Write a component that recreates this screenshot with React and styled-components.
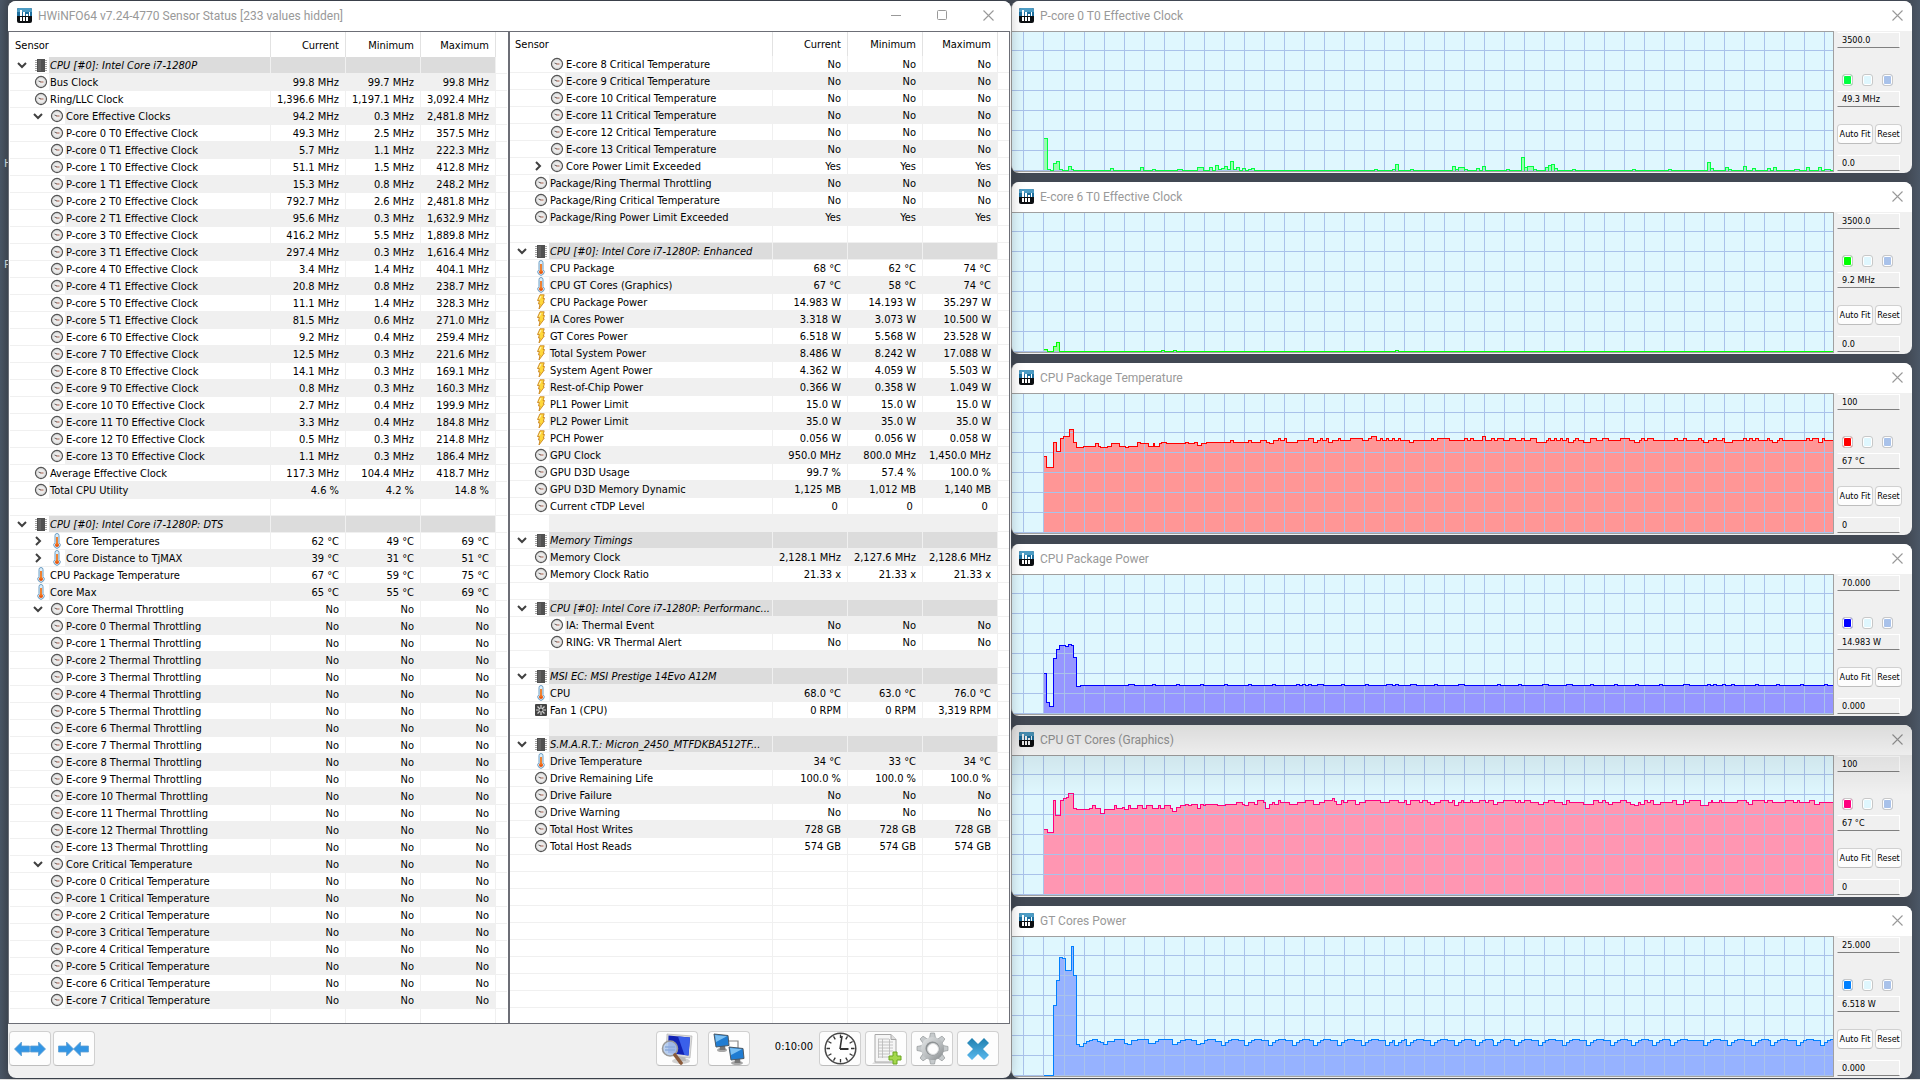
import styled, { createGlobalStyle, css } from "styled-components";

const GlobalStyle = createGlobalStyle`
    * {
        box-sizing: border-box;
    }

    body {
        margin: 0;
        background: #444d5a;
        font-family: 'DejaVu Sans Condensed', 'DejaVu Sans', sans-serif;
        font-size: 11px;
        color: #000;
        overflow: hidden;
    }

    button, input {
        font-family: inherit;
        font-size: inherit;
        color: inherit;
        margin: 0;
        padding: 0;
    }
`

const Desktop = styled.div`
    position: relative;
    display: grid;
    grid-template-columns: minmax(0, 1003fr) minmax(0, 901fr);
    height: 100vh;
    padding: 1px 8px;
    background: linear-gradient(90deg, #4b5766 0, #414853 12px, #414853 calc(100% - 14px), #4b5766 100%);
    border-bottom: 1px solid #e4e4e4;
`

const DesktopLabel = styled.span`
    position: absolute;
    left: 4px;
    top: ${p => p.$top}px;
    font-family: 'Noto Sans', sans-serif;
    font-size: 11px;
    line-height: 16px;
    color: #dfe3e8;
`

const MainWindow = styled.section`
    position: relative;
    z-index: 1;
    display: flex;
    flex-direction: column;
    min-height: 0;
    background: #f0f0f0;
    border-radius: 8px;
    overflow: hidden;
    box-shadow: 0 0 14px rgba(0, 0, 0, 0.22);
`

const TitleBar = styled.header`
    display: flex;
    align-items: center;
    height: 30px;
    flex: none;
    padding: 0 0 2px ${p => p.$inset}px;
    background: #fff;
`

const Title = styled.h1`
    flex: 1;
    margin: 0 0 0 6px;
    padding-top: 2px;
    font-family: 'Roboto', sans-serif;
    font-weight: 400;
    font-size: 12px;
    line-height: 16px;
    color: #999;
    white-space: nowrap;
`

const CaptionButton = styled.button`
    display: flex;
    align-items: center;
    justify-content: center;
    width: ${p => p.$width}px;
    height: 28px;
    border: 0;
    background: none;
    color: #999;
`

const Lists = styled.div`
    display: grid;
    grid-template-columns: minmax(0, 1fr) minmax(0, 1fr);
    grid-template-rows: minmax(0, 1fr);
    flex: 1;
    min-height: 0;
    padding-right: 1px;
`

const ListFrame = styled.div`
    overflow: hidden;
    background: #fff;
    border: 1px solid #6c6e76;
    padding: 0 ${p => p.$gutter}px;
`

const Table = styled.table`
    width: 100%;
    table-layout: fixed;
    border-collapse: separate;
    border-spacing: 0;
`

const HeadCell = styled.th`
    height: ${p => p.$height}px;
    padding: 2px 6px 0 5px;
    font-weight: 400;
    line-height: 16px;
    text-align: ${p => p.$first ? "left" : "right"};
    border-right: 1px solid ${p => p.$last ? "transparent" : "#e2e2e2"};
`

const shade = {
    plain: "#fff",
    odd: "#f0f0f0",
    group: "#dcdcdc",
}

const cell = css`
    height: 17px;
    line-height: 14px;
    padding: 0;
    border-right: 1px solid #f0f0f0;
    border-bottom: 1px solid #f0f0f0;
    white-space: nowrap;
`

const NameCell = styled.td`
    ${cell}
`

const ValueCell = styled.td`
    ${cell}
    padding: 2px 6px 0 0;
    text-align: right;
    background: ${p => shade[p.$shade]};
`

const TailCell = styled.td`
    ${cell}
    border-right: 0;
`

const NameRow = styled.div`
    display: flex;
    height: 16px;
    padding-left: ${p => 4 + p.$level * 16}px;
`

const ToggleSlot = styled.span`
    flex: none;
    width: 19px;
`

const Toggle = styled.button`
    display: flex;
    align-items: center;
    justify-content: center;
    width: 16px;
    height: 16px;
    border: 0;
    background: none;
`

const IconSlot = styled.span`
    display: flex;
    align-items: center;
    justify-content: center;
    flex: none;
    width: 16px;
    height: 16px;
`

const Label = styled.span`
    flex: 1;
    min-width: 0;
    padding: 2px 0 0 1px;
    overflow: hidden;
    background: ${p => shade[p.$shade]};
    font-style: ${p => p.$shade === "group" ? "italic" : "normal"};
`

const Toolbar = styled.footer`
    display: flex;
    align-items: flex-start;
    flex: none;
    height: 54px;
    padding: 7px 12px 0 1px;
`

const ButtonGroup = styled.div`
    display: flex;
    gap: ${p => p.$gap}px;
`

const Spacer = styled.div`
    flex: 1;
`

const Timer = styled.time`
    width: 69px;
    padding: 8px 6px 0 0;
    line-height: 16px;
    text-align: right;
`

const ToolButton = styled.button`
    display: flex;
    align-items: center;
    justify-content: center;
    width: 42px;
    height: 35px;
    background: #fdfdfd;
    border: 1px solid #d0d0d0;
    border-bottom-color: #bdbdbd;
    border-radius: 4px;
`

const GraphColumn = styled.div`
    display: flex;
    flex-direction: column;
    gap: 9px;
    min-height: 0;
`

const GraphWindow = styled.section`
    position: relative;
    flex: none;
    display: flex;
    flex-direction: column;
    height: 172px;
    overflow: hidden;
    background: #f0f0f0;
    border-left: 1px solid #a0a0a0;
    border-radius: 8px;

    ${p => p.$dimmed && css`
        &::after {
            content: "";
            position: absolute;
            inset: 0;
            pointer-events: none;
            background: linear-gradient(rgba(0, 0, 0, 0.14), rgba(0, 0, 0, 0.07) 30px, rgba(0, 0, 0, 0) 70px);
        }
    `}
`

const GraphBody = styled.div`
    display: flex;
    flex: 1;
`

const Plot = styled.div`
    flex: 1;
    min-width: 0;
    height: 141px;
    border-top: 1px solid #a0a0a0;
    border-right: 1px solid #a0a0a0;
    border-bottom: 1px solid #a0a0a0;
`

const PlotSvg = styled.svg`
    display: block;
    width: 100%;
    height: 139px;
    background: #dff7fe;
`

const Side = styled.div`
    display: flex;
    flex-direction: column;
    flex: none;
    width: 78px;
    padding: 1px 0 0 3px;
    font-size: 9px;
    line-height: 14px;
`

const field = css`
    width: 63px;
    height: 16px;
    padding: 0 0 0 4px;
    background: #f0f0f0;
    border: 1px solid #fff;
    border-left-color: #f0f0f0;
    border-bottom-color: #808080;
`

const Bound = styled.input`
    ${field}
`

const Reading = styled.output`
    ${field}
    display: block;
    margin: 5px 0 17px;
`

const Swatches = styled.div`
    display: flex;
    gap: 9px;
    margin: 26px 0 0 5px;
`

const Swatch = styled.button`
    width: 11px;
    height: 12px;
    border: 1px solid #c8c8c8;
    border-radius: 3px;
    background: ${p => p.$color};
    box-shadow: inset 0 0 0 1px #fff;
`

const SideButtons = styled.div`
    display: flex;
    gap: 2px;
    margin-bottom: 11px;
`

const SideButton = styled.button`
    width: ${p => p.$width}px;
    height: 20px;
    white-space: nowrap;
    overflow: hidden;
    background: #fdfdfd;
    border: 1px solid #d0d0d0;
    border-bottom-color: #bdbdbd;
    border-radius: 4px;
`

/* ---------- icons ---------- */

function AppIcon() {
    return <svg width="15" height="15" viewBox="0 0 15 15" aria-hidden="true">
        <rect width="15" height="15" rx="2" fill="#0c0f12" />
        <path d="M0 8V2a2 2 0 0 1 2-2h11a2 2 0 0 1 2 2v6z" fill="#1d6f9e" />
        <path d="M0 4V2a2 2 0 0 1 2-2h11a2 2 0 0 1 2 2v2z" fill="#4d9cc4" />
        <path d="M3 2h2v6H3zM6 4h2v4H6zM9 6h2v2H9zM12 4h1v4h-1zM3 9h2v4H3zM6 9h2v4H6zM9 9h2v4H9z" fill="#fff" />
    </svg>
}

function MinimizeIcon() {
    return <svg width="10" height="10" shapeRendering="crispEdges"><path d="M0 5.5h10" stroke="currentColor" /></svg>
}

function MaximizeIcon() {
    return <svg width="10" height="10"><rect x=".5" y=".5" width="9" height="9" rx="1" fill="none" stroke="currentColor" /></svg>
}

function CloseIcon() {
    return <svg width="11" height="11"><path d="M.5 .5l10 10M10.5 .5l-10 10" fill="none" stroke="currentColor" strokeWidth="1.1" /></svg>
}

function Chevron({ open }) {
    return <svg width="10" height="10" viewBox="0 0 10 10">
        <path d={open ? "M1 3l4 4 4-4" : "M3 1l4 4-4 4"} fill="none" stroke="#404040" strokeWidth="2" />
    </svg>
}

function GaugeIcon() {
    return <svg width="14" height="14" viewBox="0 0 14 14">
        <circle cx="7" cy="7" r="5.5" fill="#ececec" stroke="#555" strokeWidth="1.3" />
        <circle cx="7" cy="7" r="4.3" fill="none" stroke="#cfcfcf" strokeWidth=".8" />
        <path d="M4.5 6L7 7" stroke="#555" strokeWidth=".9" />
        <path d="M6.5 7h3" stroke="#a0503c" strokeWidth=".9" />
    </svg>
}

function ThermoIcon() {
    return <svg width="8" height="16" viewBox="0 0 8 16">
        <path d="M2 2.5a2 2 0 0 1 4 0v7a3.200 3.200 0 1 1-4 0z" fill="#dceefa" stroke="#6f9fc4" strokeWidth="1" />
        <circle cx="4" cy="12" r="2" fill="#e8560e" />
        <path d="M4 4v8" stroke="#f0761e" strokeWidth="1.8" />
    </svg>
}

function BoltIcon() {
    return <svg width="10" height="16" viewBox="0 0 10 16">
        <path d="M4 .8h4.200L7 4.500h1.500L7.300 8h1L3 15l1-5H2.500l.8-3.500H1.500z" fill="#ffd83a" stroke="#c98422" strokeWidth=".9" strokeLinejoin="round" />
        <path d="M5 2L3.300 5.500" stroke="#fff6c8" />
    </svg>
}

function ChipIcon() {
    return <svg width="12" height="15" viewBox="0 0 12 15">
        <path d="M0 2.500h12M0 4.500h12M0 6.500h12M0 8.500h12M0 10.500h12M0 12.500h12" stroke="#a4a4a4" strokeWidth="1" />
        <rect x="2" y="1" width="8" height="13" fill="#505050" />
        <rect x="3" y="2" width="3" height="11" fill="#626262" />
    </svg>
}

function FanIcon() {
    return <svg width="12" height="12" viewBox="0 0 12 12">
        <rect width="12" height="12" rx="1" fill="#444" />
        <path d="M6 1v10M1 6h10M2.500 2.500l7 7M9.500 2.500l-7 7" stroke="#d4d4d4" strokeWidth="1.200" />
        <circle cx="6" cy="6" r="1.600" fill="#333" />
    </svg>
}

const icons = {
    chip: ChipIcon,
    gauge: GaugeIcon,
    temp: ThermoIcon,
    power: BoltIcon,
    fan: FanIcon,
}

const leftArrow = "M0 7l7-7v4h8v6H7v4z"
const rightArrow = "M15 7L8 0v4H0v6h8v4z"

function ArrowsIcon({ inward }) {
    return <svg width="32" height="16" viewBox="0 0 32 16">
        <g fill="#3295e4" stroke="#5f9fd2" strokeWidth=".8">
            <path transform="translate(.5 1)" d={inward ? rightArrow : leftArrow} />
            <path transform={inward ? "translate(15.500 1)" : "translate(16.500 1)"} d={inward ? leftArrow : rightArrow} />
        </g>
    </svg>
}

function MonitorSearchIcon() {
    return <svg width="32" height="32" viewBox="0 0 32 32">
        <ellipse cx="20" cy="28" rx="9" ry="3" fill="#d2d2d2" />
        <path d="M17 23h7l1 5h-9z" fill="#b8b8b8" />
        <path d="M6 1l25 2-2 22L5 22z" fill="#dcdcdc" stroke="#b4b4b4" strokeWidth=".7" />
        <path d="M7.500 2.500l21.500 2-1.500 18L7 20z" fill="#1122b4" />
        <path d="M17 3.500l12 1-1.500 18-4-.5z" fill="#3a60ea" />
        <circle cx="9" cy="15.500" r="7.500" fill="#b4cdf0" fillOpacity=".88" stroke="#9a9a9a" strokeWidth="1.600" />
        <path d="M4 14h10M4 17h10" stroke="#8aabdc" strokeWidth="1.500" />
        <path d="M14 22l6 8" stroke="#8a5a3a" strokeWidth="3.600" strokeLinecap="round" />
    </svg>
}

function NetworkIcon() {
    return <svg width="32" height="32" viewBox="0 0 32 32">
        <path d="M14 8h11v8" fill="none" stroke="#888" strokeWidth="1.200" />
        <ellipse cx="9" cy="17" rx="5" ry="2" fill="#a8a8a8" />
        <path d="M7 12h5l.5 5h-6z" fill="#777" />
        <path d="M1 1l14 1.500 1 10L3 14z" fill="#1f7cd2" stroke="#4c5a66" />
        <path d="M2 2l12 1.300L3 9z" fill="#7cc0f2" />
        <ellipse cx="24" cy="30" rx="6" ry="2" fill="#a8a8a8" />
        <path d="M22 25h5l.5 5h-6z" fill="#777" />
        <path d="M16 14l14 1.500 1 10L18 27z" fill="#1f7cd2" stroke="#4c5a66" />
        <path d="M17 15l12 1.300L18 22z" fill="#7cc0f2" />
    </svg>
}

function ClockIcon() {
    const ticks = Array.from({ length: 12 }, (_, i) => i * 30)
    return <svg width="33" height="33" viewBox="0 0 33 33">
        <circle cx="16.500" cy="16.500" r="15.300" fill="#fff" stroke="#484848" strokeWidth="1.500" />
        {ticks.map(a => <path key={a} d="M16.500 2.500v3.500" stroke="#333" strokeWidth="1.300" transform={`rotate(${a} 16.500 16.500)`} />)}
        <path d="M16 17L18 4" stroke="#333" strokeWidth="1.600" />
        <path d="M16 17h8.500" stroke="#333" strokeWidth="2.200" />
    </svg>
}

function ReportIcon() {
    return <svg width="32" height="32" viewBox="0 0 32 32">
        <path d="M4 29h20l3 2H2z" fill="#dedede" />
        <path d="M5 1.500h16l5 5V29H5z" fill="#f6f6f6" stroke="#a8a8a8" />
        <path d="M21 1.500v5h5" fill="#ddd" stroke="#a8a8a8" />
        <path d="M8 6h11M8 9h15M8 12h15M8 15h15M8 18h15M8 21h12M8 24h12M8.500 6v19M12.500 6v19M19.500 6v15" stroke="#b8b8b8" strokeWidth=".8" />
        <path d="M23 19h4v4h4v4h-4v4h-4v-4h-4v-4h4z" fill="#a4d84c" stroke="#6aa61e" />
    </svg>
}

function GearIcon() {
    const teeth = Array.from({ length: 8 }, (_, i) => i * 45)
    return <svg width="33" height="33" viewBox="0 0 33 33">
        <defs>
            <linearGradient id="steel" x2="1" y2="1">
                <stop offset="0" stopColor="#e6e8e9" />
                <stop offset=".6" stopColor="#b4b8ba" />
                <stop offset="1" stopColor="#84888a" />
            </linearGradient>
        </defs>
        {teeth.map(a => <path key={a} d="M13.500 6l1-5h4l1 5z" fill="#c6cacc" stroke="#94989a" strokeWidth=".7" transform={`rotate(${a} 16.500 16.500)`} />)}
        <circle cx="16.500" cy="16.500" r="11.500" fill="url(#steel)" />
        <circle cx="16.500" cy="16.500" r="7" fill="#8e9294" />
        <circle cx="17" cy="17" r="5.500" fill="#fdfdfd" stroke="#d8dadb" />
    </svg>
}

function ExitIcon() {
    return <svg width="24" height="24" viewBox="0 0 24 24">
        <defs>
            <linearGradient id="exit" x2="0" y2="1">
                <stop offset="0" stopColor="#1f7fae" />
                <stop offset="1" stopColor="#5bb9ee" />
            </linearGradient>
        </defs>
        <path d="M6 1l6 6 6-6 5 5-6 6 6 6-5 5-6-6-6 6-5-5 6-6-6-6z" fill="url(#exit)" />
    </svg>
}

/* ---------- sensor data ---------- */

const group = name => ({ name, level: 0, icon: "chip", open: true, group: true, values: ["", "", ""] })
const row = (name, level, icon, values, open) => ({ name, level, icon, values: values.split("|"), open })
const flag = (name, level = 1, open) => row(name, level, "gauge", "No|No|No", open)
const gap = () => ({ name: "", level: 0, values: ["", "", ""] })
const empty = () => ({ ...gap(), empty: true })

const cores = ["P-core 0", "P-core 1", "P-core 2", "P-core 3", "P-core 4", "P-core 5", "E-core 6", "E-core 7",
    "E-core 8", "E-core 9", "E-core 10", "E-core 11", "E-core 12", "E-core 13"]

const clocks = [
    ["P-core 0 T0", "49.3", "2.5", "357.5"],
    ["P-core 0 T1", "5.7", "1.1", "222.3"],
    ["P-core 1 T0", "51.1", "1.5", "412.8"],
    ["P-core 1 T1", "15.3", "0.8", "248.2"],
    ["P-core 2 T0", "792.7", "2.6", "2,481.8"],
    ["P-core 2 T1", "95.6", "0.3", "1,632.9"],
    ["P-core 3 T0", "416.2", "5.5", "1,889.8"],
    ["P-core 3 T1", "297.4", "0.3", "1,616.4"],
    ["P-core 4 T0", "3.4", "1.4", "404.1"],
    ["P-core 4 T1", "20.8", "0.8", "238.7"],
    ["P-core 5 T0", "11.1", "1.4", "328.3"],
    ["P-core 5 T1", "81.5", "0.6", "271.0"],
    ["E-core 6 T0", "9.2", "0.4", "259.4"],
    ["E-core 7 T0", "12.5", "0.3", "221.6"],
    ["E-core 8 T0", "14.1", "0.3", "169.1"],
    ["E-core 9 T0", "0.8", "0.3", "160.3"],
    ["E-core 10 T0", "2.7", "0.4", "199.9"],
    ["E-core 11 T0", "3.3", "0.4", "184.8"],
    ["E-core 12 T0", "0.5", "0.3", "214.8"],
    ["E-core 13 T0", "1.1", "0.3", "186.4"],
]

const leftRows = [
    group("CPU [#0]: Intel Core i7-1280P"),
    row("Bus Clock", 0, "gauge", "99.8 MHz|99.7 MHz|99.8 MHz"),
    row("Ring/LLC Clock", 0, "gauge", "1,396.6 MHz|1,197.1 MHz|3,092.4 MHz"),
    row("Core Effective Clocks", 1, "gauge", "94.2 MHz|0.3 MHz|2,481.8 MHz", true),
    ...clocks.map(([core, ...v]) => row(`${core} Effective Clock`, 1, "gauge", v.map(n => `${n} MHz`).join("|"))),
    row("Average Effective Clock", 0, "gauge", "117.3 MHz|104.4 MHz|418.7 MHz"),
    row("Total CPU Utility", 0, "gauge", "4.6 %|4.2 %|14.8 %"),
    gap(),
    group("CPU [#0]: Intel Core i7-1280P: DTS"),
    row("Core Temperatures", 1, "temp", "62 °C|49 °C|69 °C", false),
    row("Core Distance to TjMAX", 1, "temp", "39 °C|31 °C|51 °C", false),
    row("CPU Package Temperature", 0, "temp", "67 °C|59 °C|75 °C"),
    row("Core Max", 0, "temp", "65 °C|55 °C|69 °C"),
    flag("Core Thermal Throttling", 1, true),
    ...cores.map(core => flag(`${core} Thermal Throttling`)),
    flag("Core Critical Temperature", 1, true),
    ...cores.slice(0, 8).map(core => flag(`${core} Critical Temperature`)),
    empty(),
]

const rightRows = [
    ...cores.slice(8).map(core => flag(`${core} Critical Temperature`)),
    row("Core Power Limit Exceeded", 1, "gauge", "Yes|Yes|Yes", false),
    flag("Package/Ring Thermal Throttling", 0),
    flag("Package/Ring Critical Temperature", 0),
    row("Package/Ring Power Limit Exceeded", 0, "gauge", "Yes|Yes|Yes"),
    gap(),
    group("CPU [#0]: Intel Core i7-1280P: Enhanced"),
    row("CPU Package", 0, "temp", "68 °C|62 °C|74 °C"),
    row("CPU GT Cores (Graphics)", 0, "temp", "67 °C|58 °C|74 °C"),
    row("CPU Package Power", 0, "power", "14.983 W|14.193 W|35.297 W"),
    row("IA Cores Power", 0, "power", "3.318 W|3.073 W|10.500 W"),
    row("GT Cores Power", 0, "power", "6.518 W|5.568 W|23.528 W"),
    row("Total System Power", 0, "power", "8.486 W|8.242 W|17.088 W"),
    row("System Agent Power", 0, "power", "4.362 W|4.059 W|5.503 W"),
    row("Rest-of-Chip Power", 0, "power", "0.366 W|0.358 W|1.049 W"),
    row("PL1 Power Limit", 0, "power", "15.0 W|15.0 W|15.0 W"),
    row("PL2 Power Limit", 0, "power", "35.0 W|35.0 W|35.0 W"),
    row("PCH Power", 0, "power", "0.056 W|0.056 W|0.058 W"),
    row("GPU Clock", 0, "gauge", "950.0 MHz|800.0 MHz|1,450.0 MHz"),
    row("GPU D3D Usage", 0, "gauge", "99.7 %|57.4 %|100.0 %"),
    row("GPU D3D Memory Dynamic", 0, "gauge", "1,125 MB|1,012 MB|1,140 MB"),
    row("Current cTDP Level", 0, "gauge", "0\u00a0|0\u00a0|0\u00a0"),
    gap(),
    group("Memory Timings"),
    row("Memory Clock", 0, "gauge", "2,128.1 MHz|2,127.6 MHz|2,128.6 MHz"),
    row("Memory Clock Ratio", 0, "gauge", "21.33 x|21.33 x|21.33 x"),
    gap(),
    group("CPU [#0]: Intel Core i7-1280P: Performanc..."),
    flag("IA: Thermal Event"),
    flag("RING: VR Thermal Alert"),
    gap(),
    group("MSI EC: MSI Prestige 14Evo A12M"),
    row("CPU", 0, "temp", "68.0 °C|63.0 °C|76.0 °C"),
    row("Fan 1 (CPU)", 0, "fan", "0 RPM|0 RPM|3,319 RPM"),
    gap(),
    group("S.M.A.R.T.: Micron_2450_MTFDKBA512TF..."),
    row("Drive Temperature", 0, "temp", "34 °C|33 °C|34 °C"),
    row("Drive Remaining Life", 0, "gauge", "100.0 %|100.0 %|100.0 %"),
    flag("Drive Failure", 0),
    flag("Drive Warning", 0),
    row("Total Host Writes", 0, "gauge", "728 GB|728 GB|728 GB"),
    row("Total Host Reads", 0, "gauge", "574 GB|574 GB|574 GB"),
    ...Array.from({ length: 10 }, empty),
]

/* ---------- graph data: "x:y" steps, each level holds until the next x ---------- */

const parse = text => text.trim().split(/\s+/).map(s => s.split(":").map(Number))

// short pulses on top of a flat line, "from-to:level"
const pulses = (base, text) => text.trim().split(/\s+/).flatMap(s => {
    const [span, y] = s.split(":")
    const [from, to] = span.split("-").map(Number)
    return [[from, Number(y)], [to, base]]
})

const pcore = [
    ...parse(`32:106 35:137 38:138 41:131 44:129 47:137 50:138 56:134 59:137 61:138 98:136 101:138 128:135 131:138
        140:137 143:138 165:137 170:138 185:135 191:138 197:135 200:138 203:133 206:137 209:136 212:134 215:137 218:129
        221:137 224:135 227:138 230:136 233:138 236:137 239:136 242:138`),
    ...pulses(138, `362-365:137 380-383:137 383-386:132 398-401:137 440-443:134 443-446:137 446-452:135 452-455:137
        464-467:136 470-473:134 494-497:137 509-512:125 512-515:135 515-521:134 521-524:137 533-536:135 536-539:133
        539-542:132 542-545:136 560-563:137 620-623:137 656-659:137 695-698:130 698-701:136 713-716:135 716-719:137
        731-734:134 740-743:136 755-758:136 761-764:135 782-787:137 794-797:135 806-809:135 812-818:137`),
]

const ecore = [
    ...parse("32:136 35:138 41:133 44:129 47:138"),
    ...pulses(138, "149-152:137 161-164:137 383-386:137"),
]

const packageTemp = parse(`32:62 34:73 41:48 44:57 48:44 51:42 57:35 61:48 64:53 71:52 83:49 86:52 88:53 95:52 99:49
    107:52 113:53 116:52 125:48 128:49 136:52 141:49 142:52 147:49 149:48 154:49 173:48 176:49 182:48 185:51 189:49
    194:48 218:46 221:48 236:46 239:48 248:46 254:48 257:49 261:46 266:44 268:46 272:44 274:48 285:46 296:44 301:48
    305:46 308:44 310:46 314:44 316:48 320:46 326:44 328:46 338:44 350:46 356:44 359:42 364:46 368:44 370:46 374:44
    376:46 380:44 382:46 386:44 388:46 397:48 401:46 419:44 421:46 425:44 437:46 452:44 455:46 458:44 461:46 470:42
    473:46 479:44 482:46 485:44 491:46 497:44 503:46 509:44 512:46 518:44 524:48 534:46 536:44 538:46 542:44 544:46
    548:44 550:46 554:44 556:48 561:46 563:44 566:46 571:48 578:44 584:46 590:44 596:46 608:44 617:46 622:48 627:46
    629:44 632:46 635:44 641:46 662:44 665:46 671:44 674:46 686:44 689:46 691:48 696:46 701:44 704:46 710:44 712:48
    720:46 731:44 734:46 737:44 740:46 743:44 746:46 755:44 757:46 760:48 765:46 767:44 770:46 794:44 797:46 800:44
    806:48 810:44 812:46`)

const packagePower = [
    ...parse("32:98 34:127 37:131 41:83 44:74 47:70 53:71 56:69 59:70 61:82 64:111 68:110"),
    ...pulses(110, `116-122:109 140-143:109 164-167:109 188-191:109 212-215:109 236-239:109 260-263:109 284-287:109
        290-293:109 296-299:109 305-311:109 329-332:109 353-356:109 374-380:109 383-386:109 398-404:109 422-425:109
        446-452:109 485-488:109 506-509:109 530-536:109 554-560:109 578-581:109 602-605:109 623-626:109 647-650:109
        671-677:109 695-698:109 701-704:109 710-713:109 719-722:109 743-746:109 764-767:109 788-791:109 812-815:109`),
]

const gtTemp = parse(`32:73 35:76 41:44 43:59 48:44 51:42 54:41 56:37 61:52 64:53 77:52 80:49 83:52 88:57 92:53 102:49
    104:52 110:51 112:53 116:49 118:52 125:49 130:52 134:49 140:52 146:49 148:52 152:49 158:52 160:55 164:51 168:49
    173:48 176:49 179:48 185:52 188:48 191:49 193:48 205:49 213:48 224:46 230:48 232:49 236:46 242:48 245:44 251:46
    253:52 257:48 260:46 262:48 266:44 268:46 277:48 285:46 293:44 301:48 307:46 312:44 320:42 322:45 324:48 329:44
    331:46 335:44 343:48 347:46 353:44 368:46 377:44 386:46 392:44 394:48 398:44 407:46 410:44 415:46 418:48 422:46
    428:44 436:46 440:44 442:49 446:46 449:44 451:46 458:44 460:46 467:44 473:46 476:44 481:48 485:46 491:44 503:46
    506:44 508:46 512:44 518:46 526:48 531:46 536:44 542:46 550:48 554:44 557:46 571:48 581:44 586:46 590:44 593:46
    596:48 600:46 608:44 614:46 618:48 622:49 626:46 628:48 632:44 635:46 638:44 641:48 648:46 660:44 664:48 671:44
    673:46 677:44 688:49 696:46 699:44 700:46 707:44 709:46 725:44 734:46 736:48 740:44 752:46 755:44 760:46 773:44
    781:46 785:44 787:46 797:44 802:48 807:46`)

// the GPU power settles into a regular rise and drop
const dips = [209, 232, 256, 280, 301, 325, 349, 373, 382, 394, 418, 442, 463, 481, 502, 526, 550, 574, 598, 619, 640,
    658, 691, 715, 739, 758, 784, 808]

const gtPower = [
    ...parse(`32:138 41:68 44:43 47:20 50:21 53:33 59:9 61:38 64:107 67:109 71:106 74:104 77:103 80:102 85:104 88:105
        91:107 95:104 102:102 112:106 115:107 119:103 125:102 136:106 143:104 146:102 160:107 165:105 168:103 173:102
        179:103 184:107 188:106 192:103 195:102 203:104`),
    ...dips.flatMap((x, i) => [[x, 108], [x + 4, 105], [x + 7, 103], [x + 10, 102], [x + 17, 103]]
        .filter(([at]) => at < (dips[i + 1] ?? 821))),
]

const graphs = [
    { title: "P-core 0 T0 Effective Clock", max: "3500.0", value: "49.3 MHz", min: "0.0", color: "#00ff40", fill: "#96ffae", steps: pcore },
    { title: "E-core 6 T0 Effective Clock", max: "3500.0", value: "9.2 MHz", min: "0.0", color: "#00ff00", fill: "#96ff96", steps: ecore },
    { title: "CPU Package Temperature", max: "100", value: "67 °C", min: "0", color: "#ff0000", fill: "#ff9696", steps: packageTemp },
    { title: "CPU Package Power", max: "70.000", value: "14.983 W", min: "0.000", color: "#0000ff", fill: "#9696ff", steps: packagePower },
    { title: "CPU GT Cores (Graphics)", max: "100", value: "67 °C", min: "0", color: "#ff0080", fill: "#ff96b2", steps: gtTemp, dimmed: true },
    { title: "GT Cores Power", max: "25.000", value: "6.518 W", min: "0.000", color: "#0080ff", fill: "#96b2ff", steps: gtPower },
]

/* ---------- components ---------- */

function SensorList({ rows, gutter, headHeight }) {
    return <ListFrame $gutter={gutter}>
        <Table>
            <colgroup>
                <col />
                <col width="75" />
                <col width="75" />
                <col width="75" />
                <col width="11" />
            </colgroup>
            <thead>
                <tr>
                    <HeadCell $height={headHeight} $first>Sensor</HeadCell>
                    <HeadCell $height={headHeight}>Current</HeadCell>
                    <HeadCell $height={headHeight}>Minimum</HeadCell>
                    <HeadCell $height={headHeight}>Maximum</HeadCell>
                    <HeadCell $height={headHeight} $last />
                </tr>
            </thead>
            <tbody>
                {rows.map((r, i) => <SensorRow key={i} item={r} odd={i % 2 === 1} />)}
            </tbody>
        </Table>
    </ListFrame>
}

function SensorRow({ item, odd }) {
    const tone = item.group ? "group" : odd && !item.empty ? "odd" : "plain"
    const Icon = icons[item.icon]
    return <tr>
        <NameCell>
            <NameRow $level={item.level}>
                <ToggleSlot>
                    {item.open !== undefined && <Toggle aria-label={item.open ? "Collapse" : "Expand"}>
                        <Chevron open={item.open} />
                    </Toggle>}
                </ToggleSlot>
                <IconSlot>{Icon && <Icon />}</IconSlot>
                <Label $shade={tone}>{item.name}</Label>
            </NameRow>
        </NameCell>
        {item.values.map((v, i) => <ValueCell key={i} $shade={tone}>{v}</ValueCell>)}
        <TailCell />
    </tr>
}

function Graph({ title, max, value, min, color, fill, steps, dimmed }) {
    const [first, ...rest] = steps
    const line = `M${first[0]} ${first[1] + 0.5}` + rest.map(([x, y]) => `H${x + 0.5}V${y + 0.5}`).join("") + "H2000"
    const columns = [11, 31, ...Array.from({ length: 90 }, (_, i) => 52 + i * 20)]
    const lines = [18, 38, 58, 78, 98, 118, 138]
    return <GraphWindow $dimmed={dimmed}>
        <TitleBar $inset={7}>
            <AppIcon />
            <Title as="h2">{title}</Title>
            <CaptionButton $width={30} aria-label="Close"><CloseIcon /></CaptionButton>
        </TitleBar>
        <GraphBody>
            <Plot>
                <PlotSvg shapeRendering="crispEdges" aria-label={title}>
                    <path d={`${line}V139H${first[0]}z`} fill={fill} />
                    <path d={columns.map(x => `M${x + 0.5} 0V139`).join("") + lines.map(y => `M0 ${y + 0.5}H2000`).join("")} stroke="#a9c2ea" />
                    <path d={line} fill="none" stroke={color} />
                </PlotSvg>
            </Plot>
            <Side>
                <Bound aria-label="Scale maximum" defaultValue={max} />
                <Swatches>
                    <Swatch $color={color} aria-label="Graph color" />
                    <Swatch $color="#dff7fe" aria-label="Background color" />
                    <Swatch $color="#a9c2ea" aria-label="Grid color" />
                </Swatches>
                <Reading>{value}</Reading>
                <SideButtons>
                    <SideButton $width={36}>Auto Fit</SideButton>
                    <SideButton $width={27}>Reset</SideButton>
                </SideButtons>
                <Bound aria-label="Scale minimum" defaultValue={min} />
            </Side>
        </GraphBody>
    </GraphWindow>
}

export default function App() {
    return <>
        <GlobalStyle />
        <Desktop>
            <DesktopLabel $top={155}>H</DesktopLabel>
            <DesktopLabel $top={256}>F</DesktopLabel>
            <MainWindow>
                <TitleBar $inset={9}>
                    <AppIcon />
                    <Title>HWiNFO64 v7.24-4770 Sensor Status [233 values hidden]</Title>
                    <CaptionButton $width={46} aria-label="Minimize"><MinimizeIcon /></CaptionButton>
                    <CaptionButton $width={46} aria-label="Maximize"><MaximizeIcon /></CaptionButton>
                    <CaptionButton $width={46} aria-label="Close"><CloseIcon /></CaptionButton>
                </TitleBar>
                <Lists>
                    <SensorList rows={leftRows} gutter={1} headHeight={25} />
                    <SensorList rows={rightRows} gutter={0} headHeight={24} />
                </Lists>
                <Toolbar>
                    <ButtonGroup $gap={2}>
                        <ToolButton aria-label="Expand columns"><ArrowsIcon /></ToolButton>
                        <ToolButton aria-label="Shrink columns"><ArrowsIcon inward /></ToolButton>
                    </ButtonGroup>
                    <Spacer />
                    <ButtonGroup $gap={10}>
                        <ToolButton aria-label="System summary"><MonitorSearchIcon /></ToolButton>
                        <ToolButton aria-label="Remote monitoring"><NetworkIcon /></ToolButton>
                    </ButtonGroup>
                    <Timer>0:10:00</Timer>
                    <ButtonGroup $gap={4}>
                        <ToolButton aria-label="Reset clock"><ClockIcon /></ToolButton>
                        <ToolButton aria-label="Start logging"><ReportIcon /></ToolButton>
                        <ToolButton aria-label="Settings"><GearIcon /></ToolButton>
                        <ToolButton aria-label="Exit"><ExitIcon /></ToolButton>
                    </ButtonGroup>
                </Toolbar>
            </MainWindow>
            <GraphColumn>
                {graphs.map(g => <Graph key={g.title} {...g} />)}
            </GraphColumn>
        </Desktop>
    </>
}
